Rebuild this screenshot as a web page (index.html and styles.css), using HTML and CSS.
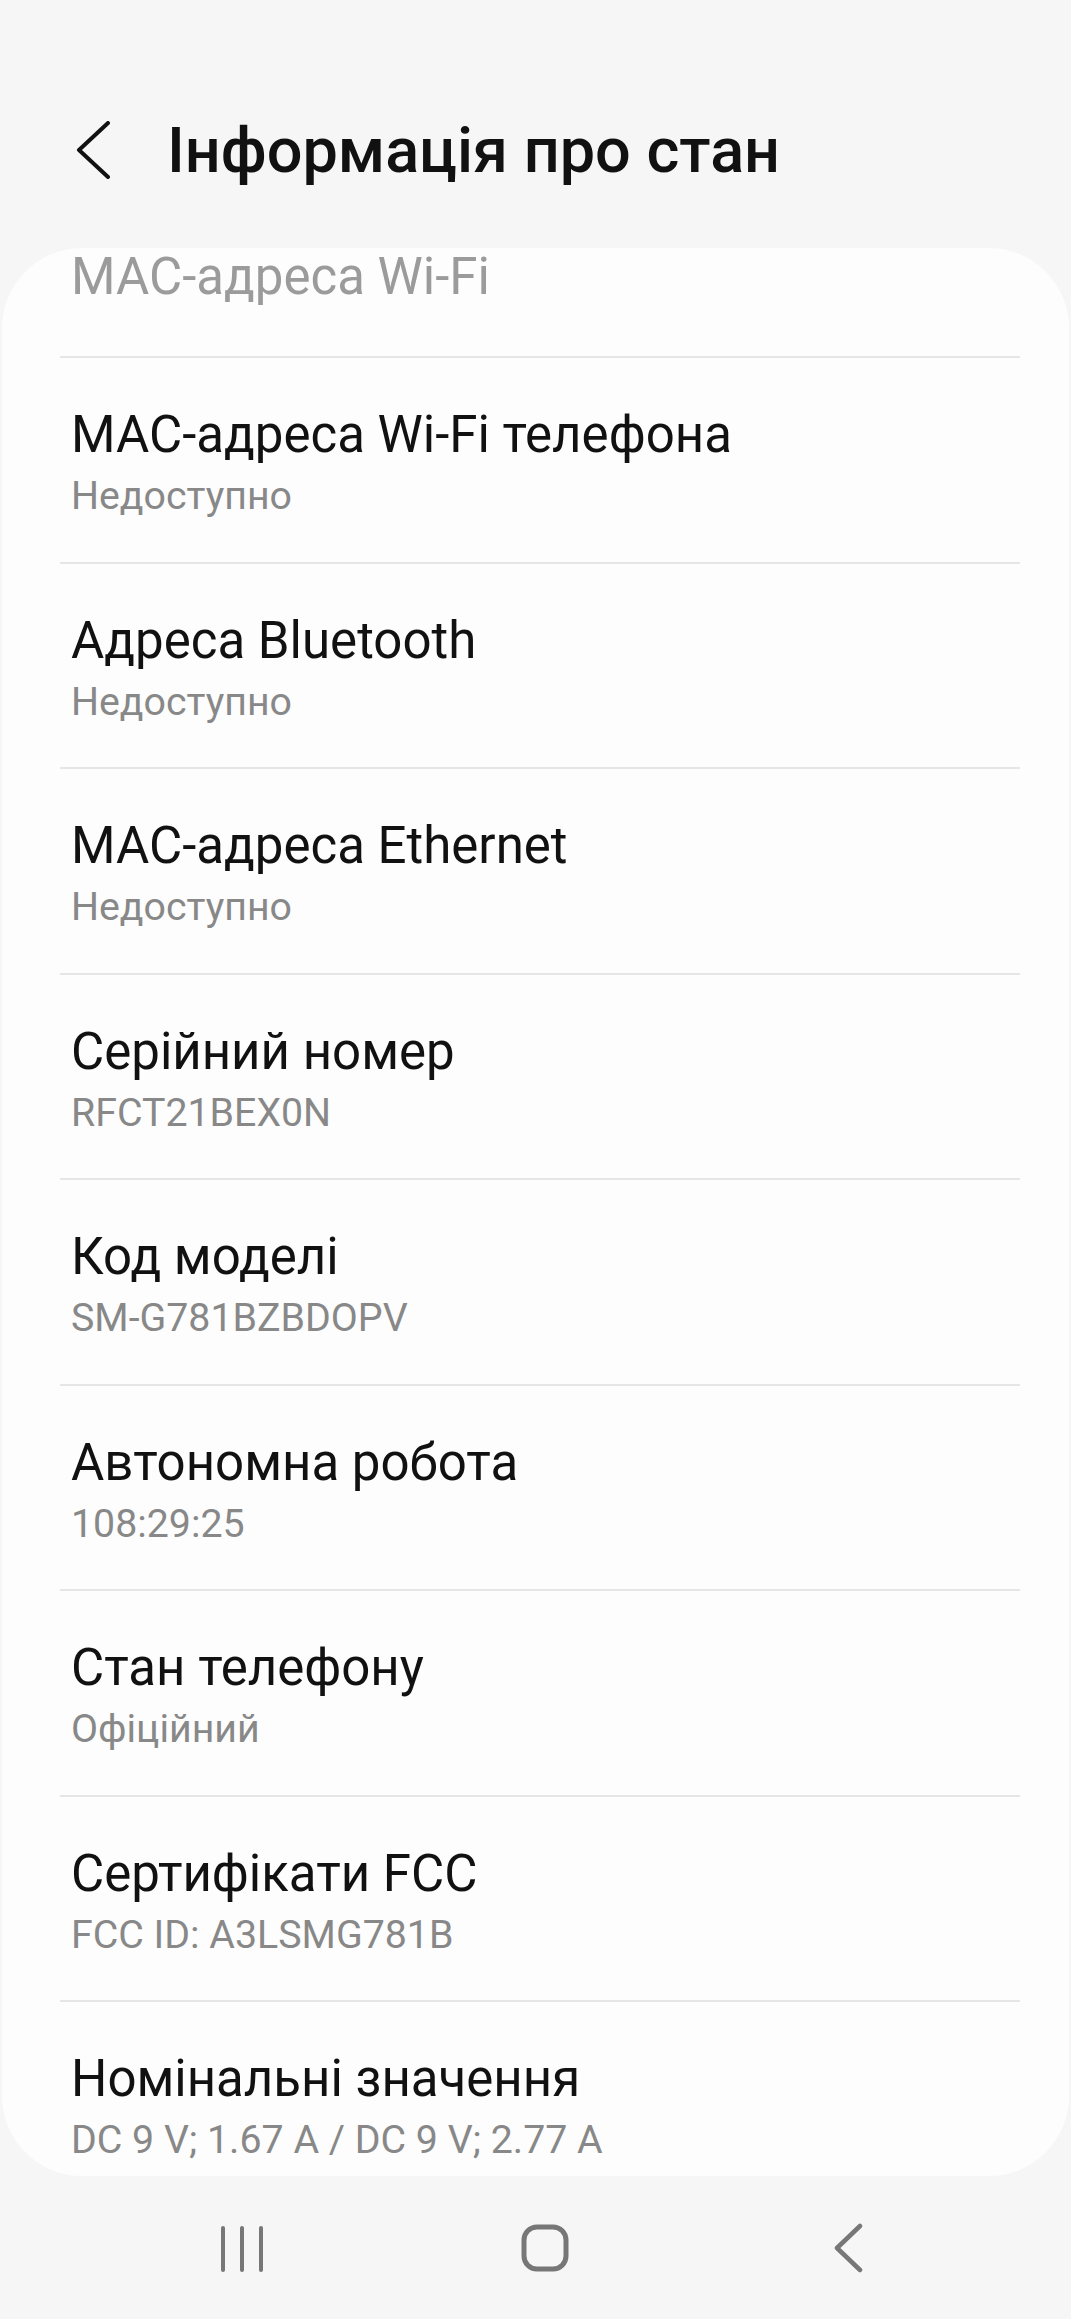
FILE: index.html
```html
<!DOCTYPE html>
<html lang="uk">
<head>
<meta charset="utf-8">
<title>Інформація про стан</title>
<link rel="stylesheet" href="styles.css">
</head>
<body>
<div class="screen">
  <header class="appbar">
    <svg class="back" viewBox="0 0 34 58" width="34" height="58">
      <polyline points="32,2 3,29 32,56" fill="none" stroke="#111" stroke-width="4" stroke-linecap="round" stroke-linejoin="round"/>
    </svg>
    <h1 class="title">Інформація про стан</h1>
  </header>

  <main class="card">
    <div class="peek">MAC-адреса Wi-Fi</div>
    <div class="row">
      <div class="row-title">MAC-адреса Wi-Fi телефона</div>
      <div class="row-sub">Недоступно</div>
    </div>
    <div class="row">
      <div class="row-title">Адреса Bluetooth</div>
      <div class="row-sub">Недоступно</div>
    </div>
    <div class="row">
      <div class="row-title">MAC-адреса Ethernet</div>
      <div class="row-sub">Недоступно</div>
    </div>
    <div class="row">
      <div class="row-title">Серійний номер</div>
      <div class="row-sub">RFCT21BEX0N</div>
    </div>
    <div class="row">
      <div class="row-title">Код моделі</div>
      <div class="row-sub">SM-G781BZBDOPV</div>
    </div>
    <div class="row">
      <div class="row-title">Автономна робота</div>
      <div class="row-sub">108:29:25</div>
    </div>
    <div class="row">
      <div class="row-title">Стан телефону</div>
      <div class="row-sub">Офіційний</div>
    </div>
    <div class="row">
      <div class="row-title">Сертифікати FCC</div>
      <div class="row-sub">FCC ID: A3LSMG781B</div>
    </div>
    <div class="row row-last">
      <div class="row-title">Номінальні значення</div>
      <div class="row-sub">DC 9 V; 1.67 A / DC 9 V; 2.77 A</div>
    </div>
  </main>

  <nav class="navbar">
    <div class="nav-slot">
      <svg viewBox="0 0 44 48" width="44" height="48">
        <g stroke="#777" stroke-width="4" stroke-linecap="round">
          <line x1="3" y1="4" x2="3" y2="46"/>
          <line x1="22" y1="4" x2="22" y2="46"/>
          <line x1="41" y1="4" x2="41" y2="46"/>
        </g>
      </svg>
    </div>
    <div class="nav-slot">
      <svg viewBox="0 0 48 48" width="48" height="48">
        <rect x="3" y="3" width="42" height="42" rx="13" ry="13" fill="none" stroke="#777" stroke-width="5"/>
      </svg>
    </div>
    <div class="nav-slot">
      <svg viewBox="0 0 30 50" width="30" height="50">
        <polyline points="27,3 4,25 27,47" fill="none" stroke="#777" stroke-width="4.5" stroke-linecap="round" stroke-linejoin="round"/>
      </svg>
    </div>
  </nav>
</div>
</body>
</html>
```

FILE: styles.css
```css
* {
  box-sizing: border-box;
}

html, body {
  margin: 0;
  padding: 0;
  background: #f6f6f6;
}

body {
  font-family: Roboto, "Noto Sans", "Liberation Sans", sans-serif;
  color: #111;
}

.screen {
  width: 1071px;
  min-height: 2319px;
  display: flex;
  flex-direction: column;
}

.appbar {
  height: 248px;
  padding: 121px 0 0 76px;
  display: flex;
  align-items: flex-start;
}

.back {
  display: block;
  flex: 0 0 34px;
}

.title {
  margin: 0 0 0 57px;
  font-size: 63px;
  line-height: 60px;
  font-weight: 500;
  color: #111;
  letter-spacing: 0;
}

.card {
  margin: 0 2px;
  background: #fdfdfd;
  border-radius: 80px;
  overflow: hidden;
}

.peek {
  padding: 3px 0 0 69px;
  font-size: 51px;
  line-height: 51px;
  color: #9b9b9b;
  height: 108px;
}

.row {
  margin: 0 49px 0 58px;
  border-top: 2px solid #e6e6e6;
  padding: 47px 0 42.5px 11px;
}

.row-last {
  padding-bottom: 13px;
}

.row-title {
  font-size: 51px;
  line-height: 60px;
  color: #111;
  white-space: nowrap;
}

.row-sub {
  margin-top: 8px;
  font-size: 39.3px;
  line-height: 46px;
  color: #888;
  white-space: nowrap;
}

.navbar {
  height: 144px;
  padding-left: 90px;
  display: flex;
  align-items: center;
}

.nav-slot {
  flex: 0 0 303px;
  display: flex;
  justify-content: center;
  align-items: center;
}

.nav-slot svg {
  display: block;
}
```
